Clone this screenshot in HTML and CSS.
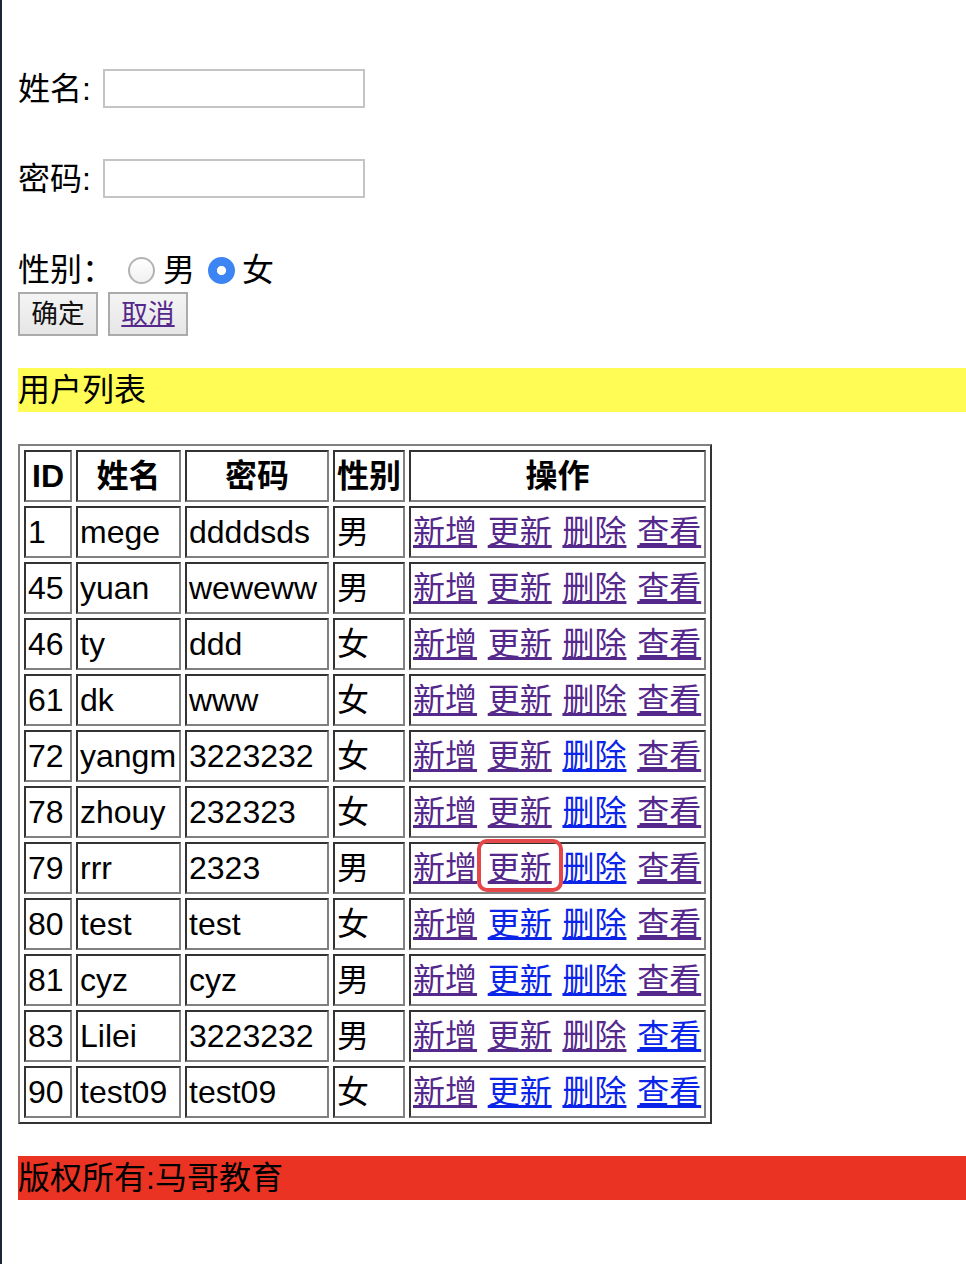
FILE: index.html
```html
<!DOCTYPE html>
<html lang="zh">
<head>
<meta charset="utf-8">
<title>用户列表</title>
<link rel="stylesheet" href="styles.css">
</head>
<body>
<form class="user-form">
  <div class="field">
    <label class="field-label" for="name">姓名:</label>
    <input class="text-input" id="name" type="text">
  </div>
  <div class="field field-next">
    <label class="field-label" for="pwd">密码:</label>
    <input class="text-input" id="pwd" type="password">
  </div>
  <div class="gender-row">
    <span class="gender-label">性别：</span>
    <input class="radio radio-m" type="radio" name="sex" id="sex-m"><label class="radio-text radio-text-m" for="sex-m">男</label>
    <input class="radio radio-f" type="radio" name="sex" id="sex-f" checked><label class="radio-text radio-text-f" for="sex-f">女</label>
  </div>
  <div class="buttons">
    <button type="button" class="btn">确定</button>
    <button type="button" class="btn"><a href="#" class="lnk v">取消</a></button>
  </div>
</form>

<div class="bar bar-yellow">用户列表</div>

<table class="users">
  <thead>
    <tr><th class="c-id">ID</th><th class="c-name">姓名</th><th class="c-pwd">密码</th><th class="c-sex">性别</th><th class="c-op">操作</th></tr>
  </thead>
  <tbody>
    <tr><td>1</td><td>mege</td><td>ddddsds</td><td>男</td><td class="ops"><a href="#" class="lnk v">新增</a> <a href="#" class="lnk v">更新</a> <a href="#" class="lnk v">删除</a> <a href="#" class="lnk v">查看</a></td></tr>
    <tr><td>45</td><td>yuan</td><td>weweww</td><td>男</td><td class="ops"><a href="#" class="lnk v">新增</a> <a href="#" class="lnk v">更新</a> <a href="#" class="lnk v">删除</a> <a href="#" class="lnk v">查看</a></td></tr>
    <tr><td>46</td><td>ty</td><td>ddd</td><td>女</td><td class="ops"><a href="#" class="lnk v">新增</a> <a href="#" class="lnk v">更新</a> <a href="#" class="lnk v">删除</a> <a href="#" class="lnk v">查看</a></td></tr>
    <tr><td>61</td><td>dk</td><td>www</td><td>女</td><td class="ops"><a href="#" class="lnk v">新增</a> <a href="#" class="lnk v">更新</a> <a href="#" class="lnk v">删除</a> <a href="#" class="lnk v">查看</a></td></tr>
    <tr><td>72</td><td>yangm</td><td>3223232</td><td>女</td><td class="ops"><a href="#" class="lnk v">新增</a> <a href="#" class="lnk v">更新</a> <a href="#" class="lnk u">删除</a> <a href="#" class="lnk v">查看</a></td></tr>
    <tr><td>78</td><td>zhouy</td><td>232323</td><td>女</td><td class="ops"><a href="#" class="lnk v">新增</a> <a href="#" class="lnk v">更新</a> <a href="#" class="lnk u">删除</a> <a href="#" class="lnk v">查看</a></td></tr>
    <tr><td>79</td><td>rrr</td><td>2323</td><td>男</td><td class="ops"><a href="#" class="lnk v">新增</a> <a href="#" class="lnk v highlight">更新</a> <a href="#" class="lnk u">删除</a> <a href="#" class="lnk v">查看</a></td></tr>
    <tr><td>80</td><td>test</td><td>test</td><td>女</td><td class="ops"><a href="#" class="lnk v">新增</a> <a href="#" class="lnk u">更新</a> <a href="#" class="lnk u">删除</a> <a href="#" class="lnk v">查看</a></td></tr>
    <tr><td>81</td><td>cyz</td><td>cyz</td><td>男</td><td class="ops"><a href="#" class="lnk v">新增</a> <a href="#" class="lnk u">更新</a> <a href="#" class="lnk u">删除</a> <a href="#" class="lnk v">查看</a></td></tr>
    <tr><td>83</td><td>Lilei</td><td>3223232</td><td>男</td><td class="ops"><a href="#" class="lnk v">新增</a> <a href="#" class="lnk v">更新</a> <a href="#" class="lnk v">删除</a> <a href="#" class="lnk u">查看</a></td></tr>
    <tr><td>90</td><td>test09</td><td>test09</td><td>女</td><td class="ops"><a href="#" class="lnk v">新增</a> <a href="#" class="lnk u">更新</a> <a href="#" class="lnk u">删除</a> <a href="#" class="lnk u">查看</a></td></tr>
  </tbody>
</table>

<div class="bar bar-red">版权所有:马哥教育</div>
</body>
</html>
```
FILE: styles.css
```css
html {
  margin: 0;
  padding: 0;
  background: #ffffff;
}

body {
  margin: 0;
  padding: 69px 0 40px 16px;
  min-height: 100vh;
  box-sizing: border-box;
  border-left: 2px solid #1c2636;
  font-family: "Liberation Sans", "Noto Sans CJK SC", sans-serif;
  font-size: 32px;
  line-height: 44px;
  color: #000000;
}

.user-form {
  margin: 0;
}

.field {
  display: flex;
  align-items: center;
  height: 39px;
}

.field-next {
  margin-top: 51px;
}

.field-label {
  width: 85px;
  flex: none;
}

.text-input {
  box-sizing: border-box;
  width: 262px;
  height: 39px;
  margin: 0;
  padding: 2px 4px;
  border: 2px solid #c4c4c4;
  background: #ffffff;
  font-size: 26px;
  font-family: inherit;
}

.gender-row {
  display: flex;
  align-items: center;
  height: 44px;
  margin-top: 50px;
}

.gender-label {
  width: 96px;
  flex: none;
}

.radio {
  appearance: none;
  -webkit-appearance: none;
  box-sizing: border-box;
  width: 27px;
  height: 27px;
  margin: 0;
  border-radius: 50%;
  border: 2px solid #b3b3b3;
  background: linear-gradient(#ffffff, #f0f0f0);
  flex: none;
}

.radio:checked {
  border-color: #3d85f3;
  background: radial-gradient(circle, #ffffff 0 4.2px, #3d85f3 5px);
}

.radio-m {
  margin-left: 14px;
}

.radio-text-m {
  margin-left: 8px;
}

.radio-f {
  margin-left: 13px;
}

.radio-text-f {
  margin-left: 7px;
}

.buttons {
  display: flex;
  gap: 10px;
  height: 44px;
}

.btn {
  box-sizing: border-box;
  width: 80px;
  height: 44px;
  margin: 0;
  padding: 0;
  border: 2px solid #ababab;
  background: linear-gradient(#f4f4f4, #e6e6e6);
  font-family: "Liberation Sans", "Noto Sans CJK SC", sans-serif;
  font-size: 26.67px;
  line-height: 36px;
  color: #111111;
}

.lnk {
  text-decoration: underline;
}

.lnk.v {
  color: #55288b;
}

.lnk.u {
  color: #0b25e8;
}

.bar {
  height: 44px;
  line-height: 44px;
  margin-top: 32px;
  white-space: nowrap;
}

.bar-yellow {
  background: #fffd55;
}

.bar-red {
  background: #ea3323;
}

.users {
  margin-top: 32px;
  table-layout: fixed;
  width: 694px;
  border-collapse: separate;
  border-spacing: 4px;
  border-style: solid;
  border-width: 2px;
  border-color: #808080 #333333 #333333 #808080;
}

.users th,
.users td {
  box-sizing: border-box;
  height: 52px;
  padding: 2px;
  border-style: solid;
  border-width: 2px;
  border-color: #333333 #808080 #808080 #333333;
  line-height: 44px;
  white-space: nowrap;
  overflow: visible;
}

.users th {
  font-weight: bold;
  text-align: center;
}

.users td {
  text-align: left;
}

.c-id { width: 48px; }
.c-name { width: 105px; }
.c-pwd { width: 144px; }
.c-sex { width: 72px; }
.c-op { width: 297px; }

.ops {
  word-spacing: 1.8px;
}

.highlight {
  position: relative;
}

.highlight::after {
  content: "";
  position: absolute;
  left: -11px;
  right: -11px;
  top: -11px;
  bottom: -6px;
  border: 4.5px solid #e5484b;
  border-radius: 10px;
  pointer-events: none;
}
```
